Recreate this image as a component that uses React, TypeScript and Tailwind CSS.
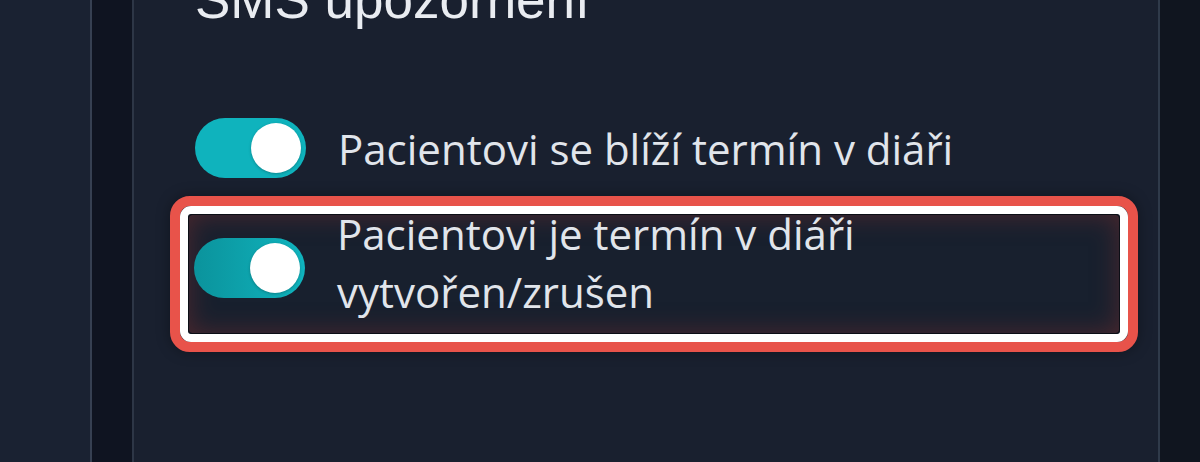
import React from "react";

function Toggle({ dim = false }: { dim?: boolean }) {
  return (
    <div
      className={
        "relative flex h-[60px] w-[111px] shrink-0 items-center justify-end rounded-full pr-[5px] " +
        (dim
          ? "bg-gradient-to-r from-[#0b939c] to-[#10b4be]"
          : "bg-[#0fb3bd]")
      }
    >
      <div className="h-[50px] w-[50px] rounded-full bg-white shadow-[0_1px_3px_rgba(0,0,0,0.25)]" />
    </div>
  );
}

export default function App() {
  return (
    <div className="flex h-[462px] w-[1200px] overflow-hidden bg-[#10151f]">
      <div className="h-full w-[90px] shrink-0 bg-[#1a2232]" />
      <div className="h-full w-[2px] shrink-0 bg-[#364052]" />
      <div className="h-full w-[40px] shrink-0 bg-[#0f1421]" />
      <div className="h-full w-[2px] shrink-0 bg-[#2d3646]" />
      <div className="flex h-full w-[1024px] shrink-0 flex-col bg-[#19202f] pl-[36px]">
        <h2
          className="mt-[-26px] pl-[25px] text-[53px] leading-[52px] text-[#e9ecf1]"
          style={{ fontFamily: '"Liberation Sans", Arial, sans-serif' }}
        >
          SMS upozornění
        </h2>
        <div
          className="mt-[92px] flex items-center gap-[32px] pl-[25px]"
          style={{ fontFamily: '"Open Sans", sans-serif' }}
        >
          <Toggle />
          <span className="text-[42px] leading-[55px] text-[#e1e5eb]">
            Pacientovi se blíží termín v diáři
          </span>
        </div>
        <div className="mt-[18px] w-[968px] rounded-[20px] border-[10px] border-[#e8534a] shadow-[0_0_14px_rgba(0,0,0,0.35)]">
          <div className="rounded-[11px] border-[8px] border-white">
            <div
              className="flex h-[120px] items-start gap-[32px] rounded-[4px] border-[1.5px] border-[#0b0e15] bg-[#18202e] pl-[5px] shadow-[inset_0_0_26px_rgba(120,45,45,0.55)]"
              style={{ fontFamily: '"Open Sans", sans-serif' }}
            >
              <div className="mt-[23px]">
                <Toggle dim />
              </div>
              <span className="mt-[-10px] text-[42px] leading-[58px] text-[#e1e5eb]">
                Pacientovi je termín v diáři
                <br />
                vytvořen/zrušen
              </span>
            </div>
          </div>
        </div>
      </div>
      <div className="h-full w-[2px] shrink-0 bg-[#2f3a4a]" />
      <div className="h-full flex-1 bg-[#10151f]" />
    </div>
  );
}
